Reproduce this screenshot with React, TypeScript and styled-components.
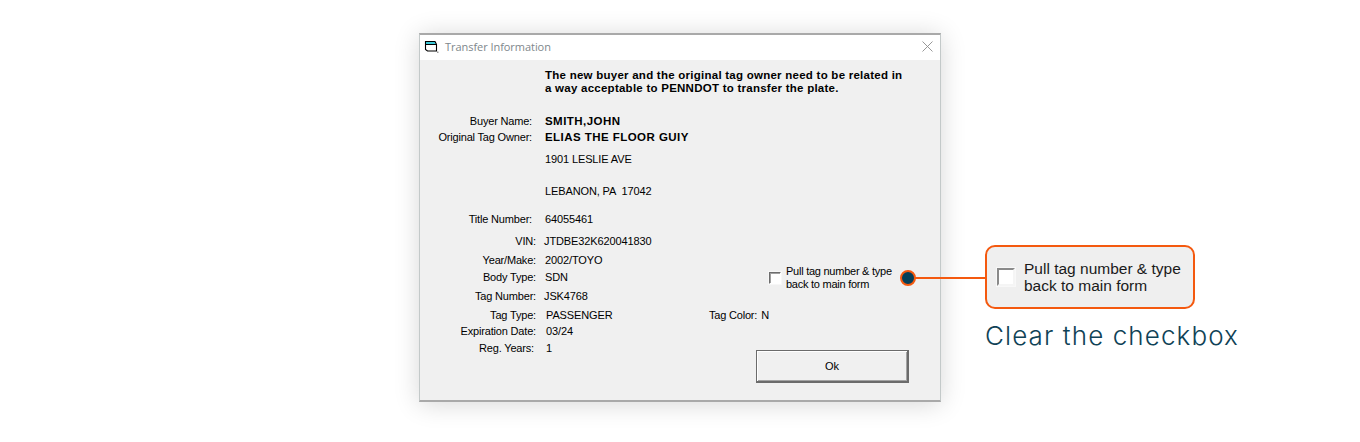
import React from "react";
import styled, { createGlobalStyle } from "styled-components";

const GlobalStyle = createGlobalStyle`
  html, body {
    margin: 0;
    padding: 0;
    background: #ffffff;
  }
  #root {
    width: 1360px;
    height: 442px;
    overflow: hidden;
  }
`;

const Stage = styled.div`
  display: flex;
  align-items: flex-start;
  gap: 44px;
  padding: 33px 0 0 419px;
  font-family: "Liberation Sans", Arial, sans-serif;
  color: #000000;
`;

const Dialog = styled.div`
  box-sizing: border-box;
  width: 522px;
  height: 369px;
  flex: none;
  display: flex;
  flex-direction: column;
  background: #f0f0f0;
  border: 1px solid #c3c9c9;
  border-top: 2px solid #a9a9a9;
  border-bottom: 2px solid #a9a9a9;
  box-shadow: 0 2px 24px rgba(0, 0, 0, 0.16);
`;

const TitleBar = styled.div`
  height: 25px;
  flex: none;
  display: flex;
  align-items: center;
  background: #ffffff;
  padding: 0 7px 2px 4px;
  box-sizing: border-box;
`;

const TitleText = styled.span`
  margin-left: 6px;
  font-family: "Open Sans", sans-serif;
  font-size: 11px;
  letter-spacing: -0.05px;
  color: #80878c;
`;

const CloseIcon = styled.svg`
  margin-left: auto;
  display: block;
`;

const DialogBody = styled.div`
  padding-top: 9px;
`;

const Notice = styled.p`
  margin: 0 0 18px 125px;
  font-size: 11.5px;
  line-height: 13px;
  font-weight: 700;
  letter-spacing: 0.25px;
  white-space: nowrap;
`;

const Columns = styled.div`
  display: flex;
  align-items: flex-start;
`;

const InfoColumn = styled.div`
  width: 280px;
  flex: none;
`;

const InfoRow = styled.div<{ $height: number }>`
  display: flex;
  align-items: center;
  height: ${(props) => props.$height}px;
  font-size: 11px;
  white-space: pre;
`;

const InfoLabel = styled.span<{ $end: number }>`
  box-sizing: border-box;
  width: ${(props) => props.$end}px;
  flex: none;
  text-align: right;
  letter-spacing: -0.18px;
`;

const InfoValue = styled.span<{ $bold?: boolean; $start: number }>`
  margin-left: ${(props) => props.$start}px;
  font-weight: ${(props) => (props.$bold ? 700 : 400)};
  font-size: ${(props) => (props.$bold ? "11.5px" : "11px")};
  letter-spacing: ${(props) => (props.$bold ? "0.45px" : "-0.12px")};
`;

const SideColumn = styled.div`
  flex: 1;
  padding-top: 152px;
`;

const CheckRow = styled.label`
  display: flex;
  align-items: center;
  gap: 5px;
  margin-left: 69px;
  height: 26px;
  font-size: 11px;
  line-height: 13px;
  letter-spacing: -0.25px;
`;

const CheckBox = styled.span`
  box-sizing: border-box;
  width: 12px;
  height: 12px;
  flex: none;
  background: #ffffff;
  border: 1px solid;
  border-color: #6d6d6d #ffffff #ffffff #6d6d6d;
  box-shadow: inset 1px 1px 0 #a0a0a0, 0 0 0 1px #f7f7f7;
`;

const TagColorRow = styled.div`
  display: flex;
  align-items: center;
  gap: 4px;
  margin: 14px 0 0 9px;
  height: 20px;
  font-size: 11px;
  letter-spacing: -0.2px;
`;

const OkButton = styled.button`
  display: block;
  box-sizing: border-box;
  width: 153px;
  height: 33px;
  margin: 25px 0 0 56px;
  padding: 0;
  background: #f0f0f0;
  border: 1px solid #6b6b6b;
  border-right-width: 2px;
  border-bottom-width: 2px;
  box-shadow: inset 1px 1px 0 #ffffff, inset -1px -1px 0 #a3a3a3;
  font-family: "Liberation Sans", Arial, sans-serif;
  font-size: 11px;
  color: #000000;
`;

const Annotation = styled.div`
  width: 210px;
  flex: none;
  margin-top: 212px;
`;

const Callout = styled.div`
  position: relative;
  box-sizing: border-box;
  height: 64px;
  display: flex;
  align-items: center;
  gap: 9px;
  padding-left: 10px;
  background: #efefef;
  border: 2px solid #f4590f;
  border-radius: 10px;
`;

const Leader = styled.span`
  position: absolute;
  left: -79px;
  top: 30px;
  width: 77px;
  height: 2px;
  background: #f4590f;
`;

const LeaderDot = styled.span`
  position: absolute;
  left: -8px;
  top: -7px;
  box-sizing: border-box;
  width: 16px;
  height: 16px;
  background: #053f59;
  border: 2px solid #f4590f;
  border-radius: 50%;
`;

const CalloutBox = styled.span`
  box-sizing: border-box;
  width: 18px;
  height: 18px;
  flex: none;
  background: #ffffff;
  border: 2px solid;
  border-color: #8a8a8a #f5f5f5 #f5f5f5 #8a8a8a;
  box-shadow: 0 0 0 1px #f8f8f8;
`;

const CalloutText = styled.span`
  font-size: 15.5px;
  line-height: 17.5px;
  color: #1a1a1a;
  white-space: nowrap;
`;

const Caption = styled.div`
  margin-top: 11px;
  font-family: Inter, sans-serif;
  font-weight: 300;
  font-size: 26px;
  line-height: 32px;
  letter-spacing: 1.1px;
  color: #0f4256;
  white-space: nowrap;
`;

type Row = {
  height: number;
  label?: string;
  end?: number;
  value: string;
  bold?: boolean;
  start?: number;
};

const rows: Row[] = [
  { height: 16, label: "Buyer Name:", end: 112, value: "SMITH,JOHN", bold: true, start: 13 },
  { height: 16, label: "Original Tag Owner:", end: 112, value: "ELIAS THE FLOOR GUIY", bold: true, start: 13 },
  { height: 28, value: "1901 LESLIE AVE" },
  { height: 36, value: "LEBANON, PA  17042" },
  { height: 20, label: "Title Number:", end: 112, value: "64055461", start: 13 },
  { height: 24, label: "VIN:", end: 116, value: "JTDBE32K620041830", start: 8 },
  { height: 14, label: "Year/Make:", end: 116, value: "2002/TOYO", start: 9 },
  { height: 20, label: "Body Type:", end: 116, value: "SDN", start: 9 },
  { height: 18, label: "Tag Number:", end: 116, value: "JSK4768", start: 8 },
  { height: 20, label: "Tag Type:", end: 116, value: "PASSENGER", start: 10 },
  { height: 12, label: "Expiration Date:", end: 116, value: "03/24", start: 10 },
  { height: 22, label: "Reg. Years:", end: 114, value: "1", start: 12 },
];

export default function App() {
  return (
    <>
      <GlobalStyle />
      <Stage>
        <Dialog>
          <TitleBar>
            <svg width="15" height="14" viewBox="0 0 15 14" fill="none">
              <path d="M2 2h9l1 2.5H2z" fill="#3cc8d8" />
              <path d="M1.5 1.5h9.5l1.5 3v6.5H3.5l-2-1.5z" stroke="#000" strokeWidth="1.1" />
              <path d="M2 4.5h10.5" stroke="#000" />
              <path d="M13 11.5h1.5V13H13z" fill="#9a9a9a" />
            </svg>
            <TitleText>Transfer Information</TitleText>
            <CloseIcon width="11" height="11" viewBox="0 0 11 11">
              <path d="M0.5 0.5l10 10M10.5 0.5l-10 10" stroke="#8c8c8c" strokeWidth="0.9" />
            </CloseIcon>
          </TitleBar>
          <DialogBody>
            <Notice>
              The new buyer and the original tag owner need to be related in
              <br />
              a way acceptable to PENNDOT to transfer the plate.
            </Notice>
            <Columns>
              <InfoColumn>
                {rows.map((row) => (
                  <InfoRow key={row.value} $height={row.height}>
                    <InfoLabel $end={row.end ?? 112}>{row.label}</InfoLabel>
                    <InfoValue $bold={row.bold} $start={row.start ?? 13}>
                      {row.value}
                    </InfoValue>
                  </InfoRow>
                ))}
              </InfoColumn>
              <SideColumn>
                <CheckRow>
                  <CheckBox />
                  <span>
                    Pull tag number &amp; type
                    <br />
                    back to main form
                  </span>
                </CheckRow>
                <TagColorRow>
                  <span>Tag Color:</span>
                  <span>N</span>
                </TagColorRow>
                <OkButton>Ok</OkButton>
              </SideColumn>
            </Columns>
          </DialogBody>
        </Dialog>
        <Annotation>
          <Callout>
            <Leader>
              <LeaderDot />
            </Leader>
            <CalloutBox />
            <CalloutText>
              Pull tag number &amp; type
              <br />
              back to main form
            </CalloutText>
          </Callout>
          <Caption>Clear the checkbox</Caption>
        </Annotation>
      </Stage>
    </>
  );
}
